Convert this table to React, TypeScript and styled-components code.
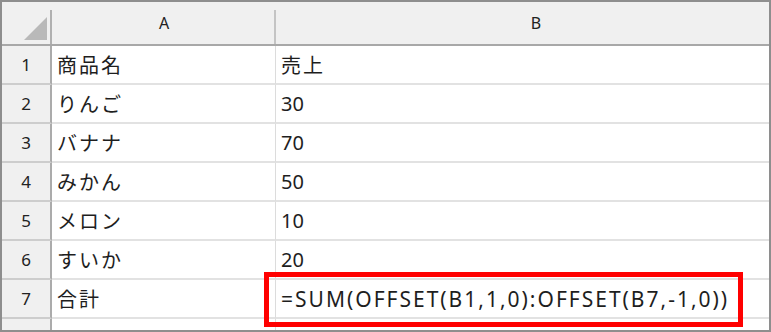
import React from 'react';
import styled, { createGlobalStyle } from 'styled-components';

const GlobalStyle = createGlobalStyle`
  html, body {
    margin: 0;
    padding: 0;
    background: #ffffff;
  }
  body {
    font-family: 'Noto Sans', 'Noto Sans CJK JP', sans-serif;
    color: #1e1e1e;
  }
`;

interface IRow {
  name: string;
  value: string;
  formula?: boolean;
}

const ROWS: IRow[] = [
  { name: '商品名', value: '売上' },
  { name: 'りんご', value: '30' },
  { name: 'バナナ', value: '70' },
  { name: 'みかん', value: '50' },
  { name: 'メロン', value: '10' },
  { name: 'すいか', value: '20' },
  { name: '合計', value: '=SUM(OFFSET(B1,1,0):OFFSET(B7,-1,0))', formula: true },
];

const Sheet = styled.div`
  box-sizing: border-box;
  width: 771px;
  height: 332px;
  border: 2px solid #8e8e8e;
  overflow: hidden;
  display: grid;
  grid-template-columns: 50px 224px 520px;
  grid-template-rows: 44px repeat(8, 39px);
  background: #fff;
`;

// header strip cells (corner + column letters)
const HeadCell = styled.div`
  position: relative;
  box-sizing: border-box;
  background: #f0f0f0;
  border-bottom: 2px solid #a8a8a8;
  display: flex;
  align-items: center;
  justify-content: center;
  font-size: 16px;
  color: #222;

  &::after {
    content: '';
    position: absolute;
    right: 0;
    top: 8px;
    bottom: 0;
    width: 2px;
    background: #c4c4c4;
  }
`;

const Corner = styled(HeadCell)`
  justify-content: flex-end;
  align-items: flex-end;
  padding: 0 5px 4px 0;

  &::after {
    background: #b0b0b0;
  }
`;

const Triangle = styled.div`
  width: 23px;
  height: 23px;
  background: #b9b9b9;
  clip-path: polygon(100% 0, 100% 100%, 0 100%);
`;

const RowHead = styled.div`
  box-sizing: border-box;
  background: #f0f0f0;
  border-right: 2px solid #ababab;
  border-bottom: 2px solid #cdcdcd;
  display: flex;
  align-items: center;
  justify-content: center;
  font-size: 17px;
  color: #222;
`;

const Cell = styled.div<{ $last?: boolean; $raised?: boolean }>`
  position: relative;
  box-sizing: border-box;
  border-bottom: 2px solid #e2e2e2;
  border-right: ${p => (p.$last ? 'none' : '1px solid #dcdcdc')};
  display: flex;
  align-items: center;
  padding-left: 5px;
  white-space: nowrap;
  font-size: 20px;
  z-index: ${p => (p.$raised ? 2 : 0)};
`;

const Label = styled.span`
  letter-spacing: 2px;
`;

const Formula = styled.span`
  font-size: 21px;
  letter-spacing: 2px;
`;

// red call-out frame drawn over the formula cell
const Highlight = styled.div`
  position: absolute;
  left: -12px;
  top: -8px;
  width: 479px;
  height: 55px;
  box-sizing: border-box;
  border: 5px solid #ff0000;
  pointer-events: none;
`;

export default function App() {
  return (
    <>
      <GlobalStyle />
      <Sheet>
        <Corner>
          <Triangle />
        </Corner>
        <HeadCell>A</HeadCell>
        <HeadCell>B</HeadCell>

        {ROWS.map((row, i) => (
          <React.Fragment key={i}>
            <RowHead>{i + 1}</RowHead>
            <Cell>
              <Label>{row.name}</Label>
            </Cell>
            <Cell $last $raised={row.formula}>
              {row.formula ? (
                <>
                  <Formula>{row.value}</Formula>
                  <Highlight />
                </>
              ) : /^\d+$/.test(row.value) ? (
                row.value
              ) : (
                <Label>{row.value}</Label>
              )}
            </Cell>
          </React.Fragment>
        ))}

        <RowHead />
        <Cell />
        <Cell $last />
      </Sheet>
    </>
  );
}
